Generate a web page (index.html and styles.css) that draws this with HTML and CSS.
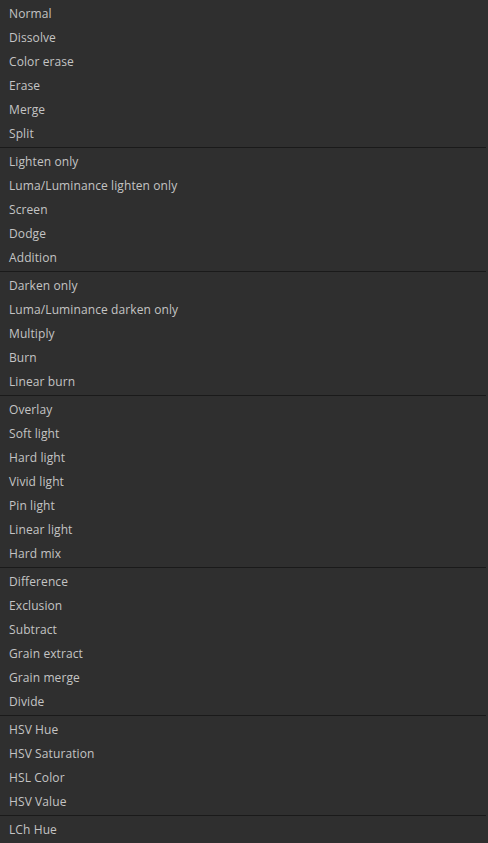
FILE: index.html
```html
<!DOCTYPE html>
<html>
<head>
<meta charset="utf-8">
<link rel="stylesheet" href="styles.css">
</head>
<body>
<div class="menu">
  <div class="group">
    <div class="item">Normal</div>
    <div class="item">Dissolve</div>
    <div class="item">Color erase</div>
    <div class="item">Erase</div>
    <div class="item">Merge</div>
    <div class="item">Split</div>
  </div>
  <div class="sep"></div>
  <div class="group">
    <div class="item">Lighten only</div>
    <div class="item">Luma/Luminance lighten only</div>
    <div class="item">Screen</div>
    <div class="item">Dodge</div>
    <div class="item">Addition</div>
  </div>
  <div class="sep"></div>
  <div class="group">
    <div class="item">Darken only</div>
    <div class="item">Luma/Luminance darken only</div>
    <div class="item">Multiply</div>
    <div class="item">Burn</div>
    <div class="item">Linear burn</div>
  </div>
  <div class="sep"></div>
  <div class="group">
    <div class="item">Overlay</div>
    <div class="item">Soft light</div>
    <div class="item">Hard light</div>
    <div class="item">Vivid light</div>
    <div class="item">Pin light</div>
    <div class="item">Linear light</div>
    <div class="item">Hard mix</div>
  </div>
  <div class="sep"></div>
  <div class="group">
    <div class="item">Difference</div>
    <div class="item">Exclusion</div>
    <div class="item">Subtract</div>
    <div class="item">Grain extract</div>
    <div class="item">Grain merge</div>
    <div class="item">Divide</div>
  </div>
  <div class="sep"></div>
  <div class="group">
    <div class="item">HSV Hue</div>
    <div class="item">HSV Saturation</div>
    <div class="item">HSL Color</div>
    <div class="item">HSV Value</div>
  </div>
  <div class="sep"></div>
  <div class="group">
    <div class="item">LCh Hue</div>
  </div>
</div>
</body>
</html>
```

FILE: styles.css
```css
html, body {
  margin: 0;
  padding: 0;
  background: #2f2f2f;
}
.menu {
  width: 488px;
  height: 843px;
  box-sizing: border-box;
  padding: 1px 0 2px 0;
  background: #2f2f2f;
  font-family: "Open Sans", "DejaVu Sans", sans-serif;
  font-size: 12px;
  letter-spacing: 0.1px;
  color: #c4c4c4;
  display: flex;
  flex-direction: column;
}
.group {
  display: flex;
  flex-direction: column;
}
.item {
  height: 24px;
  line-height: 24px;
  padding-top: 1px;
  box-sizing: border-box;
  padding-left: 9px;
  white-space: nowrap;
}
.sep {
  height: 4px;
  display: flex;
  align-items: center;
  padding-right: 2px;
}
.sep::before {
  content: "";
  display: block;
  flex: 1;
  height: 1px;
  background: #1a1a1a;
}
```
